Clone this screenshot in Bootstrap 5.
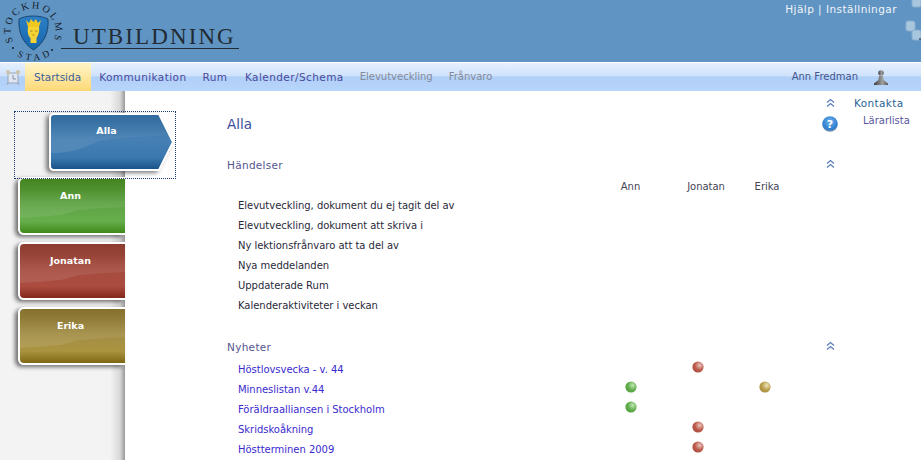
<!DOCTYPE html>
<html lang="sv">
<head>
  <meta charset="UTF-8" />
  <meta name="viewport" content="width=device-width, initial-scale=1" />
  <title>Stockholms stad - Utbildning</title>
  <link href="https://cdn.jsdelivr.net/npm/bootstrap@5.3.2/dist/css/bootstrap.min.css" rel="stylesheet" />
  <style>
    html, body { height: 460px; overflow: hidden; }
    body { font-family: "DejaVu Sans", Verdana, sans-serif; font-size: 10px; line-height: 14px; background: #fff; color: #222; }
    a { text-decoration: none; }

    .top-head { height: 62px; background: #6094c2; position: relative; }
    .logo-img { width: 70px; height: 62px; flex-shrink: 0; }
    .logo-name { font-family: "Liberation Serif", serif; font-size: 23px; line-height: 22px; letter-spacing: 2.1px; color: #222a33; border-bottom: 1px solid #222a33; padding: 0 3px 0 12px; margin: 26px 0 0 -9px; align-self: flex-start; }
    .top-links { position: absolute; top: 2px; right: 24px; color: #e8f0f8; font-size: 10.5px; letter-spacing: .45px; }
    .top-links a { color: #f0f5fa; }
    .deco { position: absolute; top: 0; right: 0; filter: blur(.6px); }

    .main-nav { height: 29px; border-top: 1px solid #fff; background: linear-gradient(#e6f0fe 0, #cfe2fc 45%, #b0d0f8 50%, #b8d4fa 100%); }
    .clock-ico { width: 16px; height: 16px; margin: 0 4px 0 5px; flex-shrink: 0; }
    .nav-tab { height: 28px; line-height: 28px; padding: 0 8px; font-size: 10.5px; color: #4a4a9c; }
    .nav-tab.current { background: linear-gradient(#fff4c8, #ffe79f 50%, #fdd878); color: #3a5f9e; padding: 0 10px 0 9px; }
    .nav-tab.wide { letter-spacing: .42px; }
    .nav-tab.room { padding-right: 9.5px; }
    .nav-tab.off { color: #858a99; font-size: 10px; }
    .nav-user { color: #44558f; margin-right: 16px; }
    .user-ico { width: 14px; height: 15px; margin-right: 33px; }

    .page-body { height: 369px; }
    .side-col { width: 125px; flex-shrink: 0; background: linear-gradient(90deg, #f3f3f3 0, #f3f3f3 88%, #d8d8d8 96%, #999 100%); position: relative; padding: 86px 0 0 18px; }
    .pupil-tab { height: 58px; margin-bottom: 7px; border: 2px solid #fff; border-right: 0; border-radius: 6px 0 0 6px; box-shadow: -3px 2px 4px rgba(0,0,0,.55); color: #fff; font-size: 9.5px; font-weight: 700; text-align: center; padding: 10px 4px 0 0; position: relative; overflow: hidden; display: block; }
    .pupil-tab span { position: relative; }
    .pupil-tab::before { content: ""; position: absolute; inset: 0; background: linear-gradient(rgba(255,255,255,0) 20%, rgba(255,255,255,.09) 60%); clip-path: polygon(0 0, 100% 0, 100% 52%, 75% 54%, 55% 58%, 40% 66%, 20% 70%, 0 72%); }
    .tab-green { background: linear-gradient(#44841f, #5ea244 45%, #66ae4c 78%, #3f8a1a 100%); }
    .tab-red { background: linear-gradient(#8c3d30, #a54c40 45%, #ac4c40 78%, #82281a 100%); }
    .tab-gold { background: linear-gradient(#86702f, #a28d46 45%, #ab9440 78%, #7e6614 100%); }
    .active-wrap { position: absolute; left: 14px; top: 20px; width: 162px; height: 68px; border: 1px dotted #1c3a78; z-index: 2; }
    .active-shape { position: absolute; left: 34px; top: 1px; filter: drop-shadow(-3px 2px 2px rgba(0,0,0,.5)); }
    .active-label { position: absolute; left: 35px; top: 12px; width: 113px; color: #fff; font-size: 9.5px; font-weight: 700; text-align: center; }

    .content-col { width: 711px; padding: 7px 0 0 102px; flex-shrink: 0; }
    .head-row { height: 16px; }
    .side-links { width: 85px; padding-top: 3px; line-height: 18px; font-size: 10.5px; }
    .side-links a { display: block; }
    .lnk-contact { color: #2a6496; margin-left: 18px; letter-spacing: .35px; }
    .lnk-list { color: #57579c; margin-left: 27px; font-size: 10px; }
    .fold-ico { width: 9px; height: 9px; display: block; margin-right: 1px; }
    .sec-fold { margin-top: 1px; }
    .page-title { font-size: 13.5px; line-height: 20px; color: #3a4c9c; }
    .help-ico { width: 16px; height: 16px; margin-right: -2px; }
    .sec-title { color: #55558f; line-height: 14px; font-size: 10.5px; letter-spacing: .3px; }
    .grid-row { display: grid; grid-template-columns: 359px 67px 67px 67px; height: 20px; line-height: 20px; align-items: center; padding-left: 11px; color: #2a2a3a; letter-spacing: -.03px; }
    .grid-row > i { display: flex; justify-content: center; }
    .col-names { grid-template-columns: 359px 67px 84px 38px; color: #445; height: 19px; margin-top: 5px; }
    .col-names b { font-weight: 400; text-align: center; }
    .news { margin-top: 6px; }
    .news a { color: #3a2ad0; }
    .dot { width: 12px; height: 12px; display: block; margin-top: -6px; filter: blur(.4px); }
    .sec-events { margin-top: 24px; }
    .sec-news { margin-top: 24px; }
  </style>
</head>
<body>
  <header class="top-head d-flex">
    <svg class="logo-img" viewBox="0 0 70 62">
      <defs>
        <path id="ringTop" d="M13.100 41.600 A 22.500 22.500 0 1 1 53.400 40.500" />
        <path id="ringLow" d="M12.600 52.700 A 30.500 30.500 0 0 0 53.400 52.700" />
        <linearGradient id="shieldBg" x1="0" y1="0" x2="0" y2="1"><stop offset="0" stop-color="#2c7fc6"/><stop offset="1" stop-color="#1666ac"/></linearGradient>
      </defs>
      <text font-family="Liberation Serif, serif" font-size="10" fill="#16202c"><textPath href="#ringTop" textLength="90">STOCKHOLMS</textPath></text>
      <text font-family="Liberation Serif, serif" font-size="9.500" fill="#16202c"><textPath href="#ringLow" startOffset="12%" textLength="35">STAD</textPath></text>
      <circle cx="13" cy="48" r="1" fill="#16202c"/><circle cx="52" cy="50" r="1" fill="#16202c"/>
      <path d="M19 19 C26 15 40 15 48 19 C49 33 44 43 33.500 50 C23 43 18 33 19 19Z" fill="url(#shieldBg)" stroke="#123a60" stroke-width=".8"/>
      <path d="M26 20 L29 23 L31 19 L33.500 22 L36 19 L38 23 L41 20 L39 27 H28Z" fill="#f3c81e"/>
      <path d="M28 27 H39 C40 33 37 37 36.500 38 V43 H30.500 V38 C29 37 27 33 28 27Z" fill="#f6d335"/>
      <path d="M30 31 h2.500 M35 31 h2.500 M32.500 35 h2" stroke="#8a6a10" stroke-width=".7"/>
    </svg>
    <h1 class="logo-name fw-normal">UTBILDNING</h1>
    <div class="top-links"><a href="#">Hjälp</a> | <a href="#">Inställningar</a></div>
    <svg class="deco" width="30" height="62" viewBox="0 0 30 62">
      <g fill="#a9c6df" stroke="#88afd0" stroke-width="1"><rect x="21" y="-4" width="9" height="11" rx="2"/><rect x="15" y="21" width="9" height="10" rx="2"/><rect x="21" y="30" width="9" height="10" rx="2"/></g>
      <path d="M28 39 h2" stroke="#3e5872" stroke-width="1.500"/>
    </svg>
  </header>

  <nav class="main-nav d-flex align-items-center">
    <svg class="clock-ico" viewBox="0 0 16 16" fill="none">
      <rect x="3" y="4" width="10" height="10" fill="#dfe6f2" stroke="#9aa5b8"/>
      <circle cx="3" cy="3" r="2" fill="#cfc4a4"/><circle cx="13" cy="3" r="2" fill="#cfc4a4"/>
      <path d="M8 6v4h3M3 14l-1 1.500M13 14l1 1.500" stroke="#8791a6"/>
    </svg>
    <a class="nav-tab current" href="#">Startsida</a>
    <a class="nav-tab wide" href="#">Kommunikation</a>
    <a class="nav-tab wide room" href="#">Rum</a>
    <a class="nav-tab wide" href="#">Kalender/Schema</a>
    <a class="nav-tab off" href="#">Elevutveckling</a>
    <a class="nav-tab off" href="#">Frånvaro</a>
    <span class="nav-user ms-auto">Ann Fredman</span>
    <svg class="user-ico" viewBox="0 0 14 15">
      <defs><linearGradient id="pawnBg" x1="0" y1="0" x2="1" y2="0"><stop offset="0" stop-color="#3a3a3a"/><stop offset=".6" stop-color="#a0a0a0"/><stop offset="1" stop-color="#5a5a5a"/></linearGradient></defs>
      <circle cx="7" cy="3" r="2.700" fill="url(#pawnBg)"/>
      <path d="M5 6h4l.6 4 4.400 3.500V15H0v-1.500L4.400 10z" fill="url(#pawnBg)"/>
    </svg>
  </nav>

  <div class="page-body d-flex">
    <aside class="side-col">
      <div class="active-wrap">
        <svg class="active-shape" width="126" height="58" viewBox="0 0 126 58">
          <defs>
            <linearGradient id="tabBlue" x1="0" y1="0" x2="0" y2="1"><stop offset="0" stop-color="#326a9c"/><stop offset=".45" stop-color="#4680b4"/><stop offset=".78" stop-color="#3a78ae"/><stop offset="1" stop-color="#174f85"/></linearGradient>
            <linearGradient id="tabGloss" x1="0" y1="0" x2="0" y2="1"><stop offset=".2" stop-color="#fff" stop-opacity="0"/><stop offset=".9" stop-color="#fff" stop-opacity=".1"/></linearGradient>
          </defs>
          <path d="M5 1 H110 L124 29 L110 57 H5 Q1 57 1 53 V5 Q1 1 5 1Z" fill="url(#tabBlue)" stroke="#fff" stroke-width="2"/>
          <path d="M2 40 C28 40 36 33 50 28 C70 24 95 24 117 22 L108 2 H5 L2 5Z" fill="url(#tabGloss)"/>
        </svg>
        <div class="active-label">Alla</div>
      </div>
      <a class="pupil-tab tab-green" href="#"><span>Ann</span></a>
      <a class="pupil-tab tab-red" href="#"><span>Jonatan</span></a>
      <a class="pupil-tab tab-gold" href="#"><span>Erika</span></a>
    </aside>

    <main class="content-col">
      <div class="head-row d-flex justify-content-end">
        <svg class="fold-ico" viewBox="0 0 9 9" fill="none" stroke="#5a7fb8" stroke-width="1.300"><path d="M1 4.500l3.500-3 3.500 3M1 8.500l3.500-3 3.500 3"/></svg>
      </div>
      <div class="d-flex justify-content-between align-items-center">
        <div class="page-title">Alla</div>
        <svg class="help-ico" viewBox="0 0 16 16">
          <defs><radialGradient id="helpBg" cx=".5" cy=".35" r=".7"><stop offset="0" stop-color="#6db2ee"/><stop offset=".7" stop-color="#2f7fcf"/><stop offset="1" stop-color="#9a9a9a"/></radialGradient></defs>
          <circle cx="8" cy="8" r="7.800" fill="url(#helpBg)"/>
          <text x="8" y="12" text-anchor="middle" font-size="11" font-weight="700" fill="#fff" font-family="DejaVu Sans, sans-serif">?</text>
        </svg>
      </div>

      <section class="sec-events">
        <div class="d-flex justify-content-between align-items-start">
          <div class="sec-title">Händelser</div>
          <svg class="fold-ico sec-fold" viewBox="0 0 9 9" fill="none" stroke="#5a7fb8" stroke-width="1.300"><path d="M1 4.500l3.500-3 3.500 3M1 8.500l3.500-3 3.500 3"/></svg>
        </div>
        <div class="grid-row col-names"><span></span><b>Ann</b><b>Jonatan</b><b>Erika</b></div>
        <div class="grid-row"><span>Elevutveckling, dokument du ej tagit del av</span></div>
        <div class="grid-row"><span>Elevutveckling, dokument att skriva i</span></div>
        <div class="grid-row"><span>Ny lektionsfrånvaro att ta del av</span></div>
        <div class="grid-row"><span>Nya meddelanden</span></div>
        <div class="grid-row"><span>Uppdaterade Rum</span></div>
        <div class="grid-row"><span>Kalenderaktiviteter i veckan</span></div>
      </section>

      <section class="sec-news">
        <div class="d-flex justify-content-between align-items-start">
          <div class="sec-title">Nyheter</div>
          <svg class="fold-ico sec-fold" viewBox="0 0 9 9" fill="none" stroke="#5a7fb8" stroke-width="1.300"><path d="M1 4.500l3.500-3 3.500 3M1 8.500l3.500-3 3.500 3"/></svg>
        </div>
        <svg width="0" height="0" class="position-absolute">
          <defs>
            <radialGradient id="dotG" cx=".65" cy=".35" r=".75"><stop offset="0" stop-color="#c4e6b6"/><stop offset=".55" stop-color="#62b04e"/><stop offset="1" stop-color="#4f9a3c"/></radialGradient>
            <radialGradient id="dotR" cx=".65" cy=".35" r=".75"><stop offset="0" stop-color="#ecc6be"/><stop offset=".55" stop-color="#bd5c4e"/><stop offset="1" stop-color="#a94a3c"/></radialGradient>
            <radialGradient id="dotY" cx=".65" cy=".35" r=".75"><stop offset="0" stop-color="#eee4bc"/><stop offset=".55" stop-color="#bb9f4e"/><stop offset="1" stop-color="#a5893a"/></radialGradient>
          </defs>
        </svg>
        <div class="news">
          <div class="grid-row"><a href="#">Höstlovsvecka - v. 44</a><i></i><i><svg class="dot" viewBox="0 0 12 12"><circle cx="6" cy="6" r="5.600" fill="url(#dotR)"/></svg></i><i></i></div>
          <div class="grid-row"><a href="#">Minneslistan v.44</a><i><svg class="dot" viewBox="0 0 12 12"><circle cx="6" cy="6" r="5.600" fill="url(#dotG)"/></svg></i><i></i><i><svg class="dot" viewBox="0 0 12 12"><circle cx="6" cy="6" r="5.600" fill="url(#dotY)"/></svg></i></div>
          <div class="grid-row"><a href="#">Föräldraalliansen i Stockholm</a><i><svg class="dot" viewBox="0 0 12 12"><circle cx="6" cy="6" r="5.600" fill="url(#dotG)"/></svg></i><i></i><i></i></div>
          <div class="grid-row"><a href="#">Skridskoåkning</a><i></i><i><svg class="dot" viewBox="0 0 12 12"><circle cx="6" cy="6" r="5.600" fill="url(#dotR)"/></svg></i><i></i></div>
          <div class="grid-row"><a href="#">Höstterminen 2009</a><i></i><i><svg class="dot" viewBox="0 0 12 12"><circle cx="6" cy="6" r="5.600" fill="url(#dotR)"/></svg></i><i></i></div>
        </div>
      </section>
    </main>

    <div class="side-links">
      <a class="lnk-contact" href="#">Kontakta</a>
      <a class="lnk-list" href="#">Lärarlista</a>
    </div>
  </div>
  <script src="https://cdn.jsdelivr.net/npm/bootstrap@5.3.2/dist/js/bootstrap.bundle.min.js"></script>
</body>
</html>
